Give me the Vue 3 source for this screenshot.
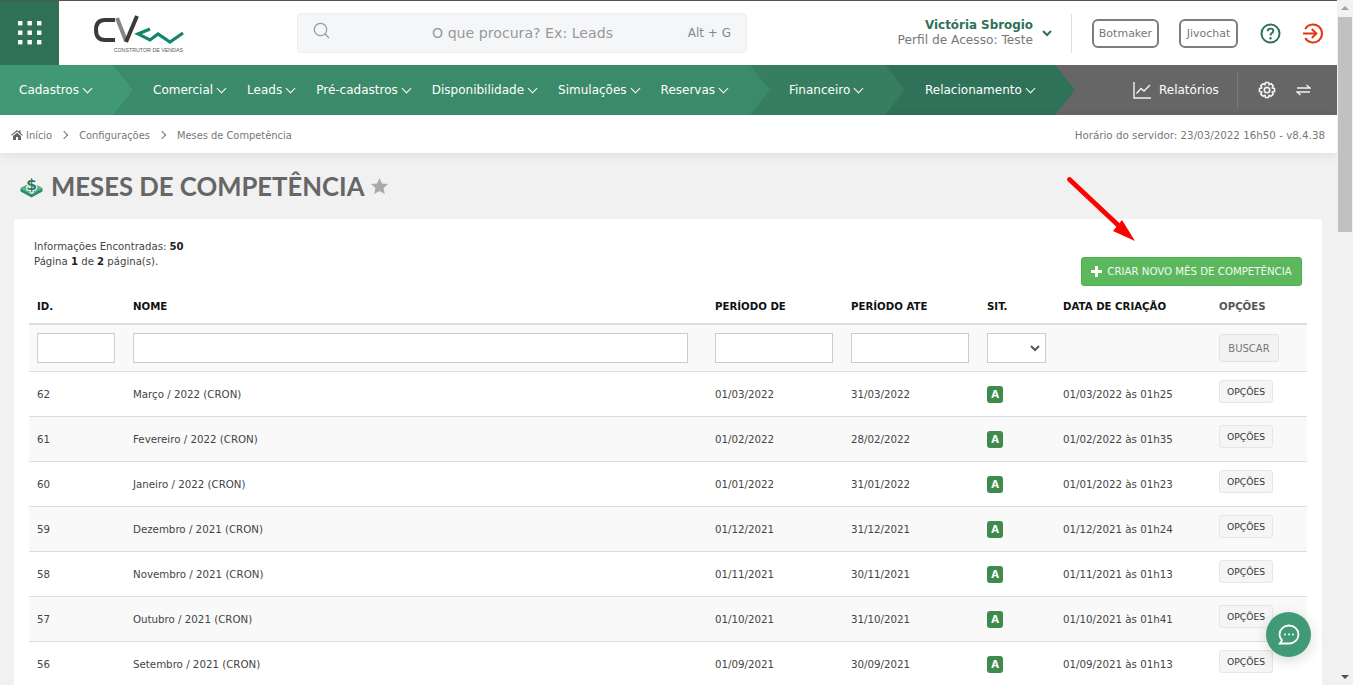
<script setup>
const navA = ['Comercial', 'Leads', 'Pré-cadastros', 'Disponibilidade', 'Simulações', 'Reservas']
const rows = [
  ['62', 'Março / 2022 (CRON)', '01/03/2022', '31/03/2022', '01/03/2022 às 01h25'],
  ['61', 'Fevereiro / 2022 (CRON)', '01/02/2022', '28/02/2022', '01/02/2022 às 01h35'],
  ['60', 'Janeiro / 2022 (CRON)', '01/01/2022', '31/01/2022', '01/01/2022 às 01h23'],
  ['59', 'Dezembro / 2021 (CRON)', '01/12/2021', '31/12/2021', '01/12/2021 às 01h24'],
  ['58', 'Novembro / 2021 (CRON)', '01/11/2021', '30/11/2021', '01/11/2021 às 01h13'],
  ['57', 'Outubro / 2021 (CRON)', '01/10/2021', '31/10/2021', '01/10/2021 às 01h41'],
  ['56', 'Setembro / 2021 (CRON)', '01/09/2021', '30/09/2021', '01/09/2021 às 01h13'],
]
</script>

<template>
  <div class="shell">
    <div class="page">
      <header class="top">
        <button class="apps" aria-label="Menu">
          <svg width="24" height="24" viewBox="0 0 24 24" fill="#fff">
            <rect v-for="p in [0,9.5,19].flatMap(y => [0,9.5,19].map(x => [x,y]))" :key="p.join()" :x="p[0]" :y="p[1]" width="4.4" height="4.4" />
          </svg>
        </button>
        <div class="logo">
          <svg width="96" height="33" viewBox="0 0 96 33" fill="none">
            <path d="M25 7 H15 Q6 7 6 17 Q6 27 15 27 H25" stroke="#3c3a38" stroke-width="4" />
            <path d="M27 5 L36 28" stroke="#8a8582" stroke-width="4" />
            <path d="M36 29 L47 3" stroke="#3c3a38" stroke-width="4" />
            <path d="M60 16 L48 21 L60 27 L68 21 L80 29 L93 20" stroke="#12856a" stroke-width="3.2" />
          </svg>
          <span class="logotext">CONSTRUTOR DE VENDAS</span>
        </div>
        <div class="search">
          <svg class="sicon" width="17" height="17" viewBox="0 0 17 17" fill="none" stroke="#9a9a9a" stroke-width="1.3">
            <circle cx="7.5" cy="7.5" r="6.2" /><path d="M12 12 L16 16" />
          </svg>
          <span class="sph">O que procura? Ex: Leads</span>
          <span class="skey">Alt + G</span>
        </div>
        <div class="user">
          <div class="uname">Victória Sbrogio</div>
          <div class="uprof">Perfil de Acesso: Teste</div>
        </div>
        <svg class="uchev" width="10" height="7" viewBox="0 0 10 7" fill="none" stroke="#2f7157" stroke-width="2"><path d="M1 1 L5 5 L9 1" /></svg>
        <div class="vline"></div>
        <button class="chat bot">Botmaker</button>
        <button class="chat jivo">Jivochat</button>
        <svg class="help" width="21" height="21" viewBox="0 0 21 21" fill="none">
          <circle cx="10.5" cy="10.5" r="9" stroke="#2f7157" stroke-width="2" />
          <path d="M7.6 8.2 Q7.8 5.6 10.5 5.6 Q13.3 5.6 13.3 8 Q13.3 9.4 11.8 10.2 Q10.5 10.9 10.5 12.4" stroke="#2f7157" stroke-width="1.9" />
          <circle cx="10.5" cy="15.2" r="1.2" fill="#2f7157" />
        </svg>
        <svg class="out" width="21" height="21" viewBox="0 0 21 21" fill="none" stroke="#e33412" stroke-width="2">
          <path d="M3.2 6 A9 9 0 1 1 3.2 15" /><path d="M1 10.5 H14" /><path d="M9.8 6 L14.3 10.5 L9.8 15" />
        </svg>
      </header>

      <nav class="nav">
        <a class="seg s1"><span class="lnk">Cadastros<i class="chev"></i></span></a>
        <div class="s2">
          <a v-for="n in navA" :key="n" class="lnk">{{ n }}<i class="chev"></i></a>
        </div>
        <a class="seg s3"><span class="lnk">Financeiro<i class="chev"></i></span></a>
        <a class="seg s4"><span class="lnk">Relacionamento<i class="chev"></i></span></a>
        <div class="s5">
          <svg width="18" height="17" viewBox="0 0 18 17" fill="none" stroke="#f2f2f2" stroke-width="1.4">
            <path d="M1 0 V16 H18" /><path d="M3.5 11.5 L8 6.5 L11 9 L17 3" />
          </svg>
          <span class="rel">Relatórios</span>
          <div class="vsep"></div>
          <svg width="18" height="18" viewBox="0 0 24 24" fill="none" stroke="#f2f2f2" stroke-width="2.2">
            <circle cx="12" cy="12" r="3.6" />
            <path d="M10 2 H14 L14.8 5 L17.4 3.6 L20.3 6.5 L18.9 9.2 L22 10 V14 L18.9 14.8 L20.3 17.5 L17.5 20.3 L14.8 18.9 L14 22 H10 L9.2 18.9 L6.5 20.3 L3.7 17.5 L5.1 14.8 L2 14 V10 L5.1 9.2 L3.7 6.5 L6.5 3.7 L9.2 5.1 Z" stroke-linejoin="round" />
          </svg>
          <svg class="swap" width="15" height="12" viewBox="0 0 15 12" fill="none" stroke="#f2f2f2" stroke-width="1.4">
            <path d="M1 4 H14 L10.5 1" /><path d="M14 8 H1 L4.5 11" />
          </svg>
        </div>
      </nav>

      <div class="crumbs">
        <svg width="12" height="10" viewBox="0 0 12 10" fill="#666"><path d="M6 0 L8 1.7 V0.6 H9.6 V3 L12 5 L11.3 5.8 L6 1.6 L0.7 5.8 L0 5 Z M2 6 L6 2.8 L10 6 V10 H7 V7 H5 V10 H2 Z" /></svg>
        <span class="c first">Início</span><i class="sepc"></i>
        <span class="c">Configurações</span><i class="sepc"></i>
        <span class="c">Meses de Competência</span>
        <span class="srv">Horário do servidor: 23/03/2022 16h50 - v8.4.38</span>
      </div>

      <main class="main">
        <div class="titlebar">
          <svg width="23" height="24" viewBox="0 0 23 24">
            <path d="M0.5 14 L11.5 20 L22.5 14 V17.5 L11.5 23.5 L0.5 17.5 Z" fill="#2f8f6d" />
            <path d="M0.5 14 L11.5 8 L22.5 14 L11.5 20 Z" fill="#4cb391" />
            <text class="dollar" x="11.5" y="15.5" text-anchor="middle">$</text>
          </svg>
          <h1>MESES DE COMPETÊNCIA</h1>
          <svg width="17" height="16" viewBox="0 0 17 16" fill="#aaa"><path d="M8.5 0 L11 5.4 L17 6.1 L12.6 10.1 L13.8 16 L8.5 13 L3.2 16 L4.4 10.1 L0 6.1 L6 5.4 Z" /></svg>
        </div>

        <svg class="arrow" width="80" height="70" viewBox="0 0 80 70">
          <path d="M3.5 4.5 L52 50" stroke="#f00" stroke-width="4.8" stroke-linecap="round" />
          <path d="M69 66 L47 56 L56 45 Z" fill="#f00" />
        </svg>

        <section class="card">
          <div class="cardhead">
            <div class="info">
              <div>Informações Encontradas: <b>50</b></div>
              <div>Página <b>1</b> de <b>2</b> página(s).</div>
            </div>
            <button class="create">
              <svg width="11" height="11" viewBox="0 0 11 11" fill="#fff"><path d="M4 0 H7 V4 H11 V7 H7 V11 H4 V7 H0 V4 H4 Z" /></svg>
              CRIAR NOVO MÊS DE COMPETÊNCIA
            </button>
          </div>
          <table>
            <colgroup>
              <col class="c1" /><col class="c2" /><col class="c3" /><col class="c3" /><col class="c5" /><col class="c6" /><col class="c1" />
            </colgroup>
            <thead>
              <tr class="hd">
                <th>ID.</th><th>NOME</th><th>PERÍODO DE</th><th>PERÍODO ATE</th><th>SIT.</th><th>DATA DE CRIAÇÃO</th><th class="op">OPÇÕES</th>
              </tr>
              <tr class="flt">
                <td><input class="i1" /></td><td><input class="i2" /></td><td><input class="i3" /></td><td><input class="i3" /></td>
                <td><div class="sel"><svg width="10" height="7" viewBox="0 0 10 7" fill="none" stroke="#555" stroke-width="2"><path d="M1 1 L5 5 L9 1" /></svg></div></td>
                <td></td>
                <td><button class="busca">BUSCAR</button></td>
              </tr>
            </thead>
            <tbody>
              <tr v-for="r in rows" :key="r[0]">
                <td>{{ r[0] }}</td><td>{{ r[1] }}</td><td>{{ r[2] }}</td><td>{{ r[3] }}</td>
                <td class="bc"><span class="badge">A</span></td>
                <td>{{ r[4] }}</td>
                <td class="optc"><button class="opt">OPÇÕES</button></td>
              </tr>
            </tbody>
          </table>
        </section>
      </main>
    </div>

    <aside class="scroll">
      <i class="up"></i>
      <div class="thumb"></div>
      <i class="down"></i>
    </aside>

    <button class="fab" aria-label="Chat">
      <svg width="22" height="22" viewBox="0 0 22 22" fill="none" stroke="#fff" stroke-width="1.8">
        <path d="M11 1.5 C16.3 1.5 20.5 5.4 20.5 10.5 C20.5 15.6 16.3 19.5 11 19.5 H1.8 L4 16.2 C2.4 14.6 1.5 12.7 1.5 10.5 C1.5 5.4 5.7 1.5 11 1.5 Z" />
        <circle cx="7" cy="10.5" r="1" fill="#fff" stroke="none" /><circle cx="11" cy="10.5" r="1" fill="#fff" stroke="none" /><circle cx="15" cy="10.5" r="1" fill="#fff" stroke="none" />
      </svg>
    </button>
  </div>
</template>

<style>
html, body { margin: 0; height: 100%; overflow: hidden; }
</style>

<style scoped>
* { box-sizing: border-box; }
.shell { position: relative; display: flex; width: 1353px; height: 685px; overflow: hidden; background: #f1f1f1; font-family: "DejaVu Sans", sans-serif; }
.page { width: 1337px; flex: none; display: flex; flex-direction: column; }
button { font-family: inherit; cursor: pointer; }

.top { height: 65px; flex: none; background: #fff; border-top: 1px solid #555; display: flex; align-items: center; }
.apps { width: 59px; height: 64px; border: 0; background: #2f7157; display: flex; align-items: center; justify-content: center; padding: 0; }
.logo { width: 96px; margin-left: 31px; display: flex; flex-direction: column; align-items: flex-end; }
.logo svg { flex: none; }
.logotext { font-size: 5.3px; line-height: 7px; color: #555; font-family: "Liberation Sans", sans-serif; white-space: nowrap; margin: 1px 3px 0 0; }
.search { margin-left: 111px; width: 450px; height: 40px; margin-top: -1px; background: #f5f6f8; border: 1px solid #eceef0; border-radius: 4px; display: flex; align-items: center; position: relative; }
.sicon { margin-left: 15px; margin-top: -5px; }
.sph { position: absolute; left: 134px; font-size: 14.15px; color: #999; white-space: nowrap; }
.skey { position: absolute; right: 15px; font-size: 12px; color: #888; }
.user { margin-left: auto; text-align: right; line-height: 15px; }
.uname { font-size: 11.9px; font-weight: 700; color: #2f7157; }
.uprof { font-size: 12.2px; color: #777; }
.uchev { margin-left: 9px; margin-right: 19px; }
.vline { width: 1px; height: 39px; background: #ddd; }
.chat { height: 29px; padding: 0; background: #fff; border: 2px solid #7d7d7d; border-radius: 6px; color: #777; font-size: 11px; }
.bot { width: 67px; margin-left: 20px; }
.jivo { width: 59px; margin-left: 20px; }
.help { margin-left: 22px; }
.out { margin-left: 21px; margin-right: 14px; }

.nav { height: 50px; flex: none; display: flex; background: #666; color: #fff; font-size: 12px; position: relative; }
.lnk { display: inline-flex; align-items: center; color: #fff; white-space: nowrap; }
.chev { display: inline-block; width: 7px; height: 7px; border: solid #fff; border-width: 0 1.8px 1.8px 0; transform: rotate(45deg); margin: -3px 2px 0 5px; }
.seg { display: flex; align-items: center; clip-path: polygon(0 0, calc(100% - 20px) 0, 100% 50%, calc(100% - 20px) 100%, 0 100%); flex: none; }
.s1 { width: 133px; padding-left: 19px; background: #419874; position: relative; z-index: 3; }
.s2 { width: 657px; margin-left: -20px; padding-left: 40px; background: #3b8a6a; display: flex; align-items: center; gap: 20px; clip-path: polygon(0 0, calc(100% - 20px) 0, 100% 50%, calc(100% - 20px) 100%, 0 100%); position: relative; z-index: 2; flex: none; }
.s3 { width: 155px; margin-left: -20px; padding-left: 39px; background: #367e5f; position: relative; z-index: 1; }
.s4 { width: 190px; margin-left: -20px; padding-left: 40px; background: #30715a; }
.s5 { flex: 1; display: flex; align-items: center; padding-left: 58px; }
.rel { margin-left: 8px; color: #fff; }
.vsep { width: 1px; height: 38px; background: #7a7a7a; margin: 0 20px 0 18px; }
.swap { margin-left: 20px; }

.crumbs { height: 38px; flex: none; background: #fff; display: flex; align-items: center; padding: 2px 12px 0 11px; font-size: 9.9px; color: #777; box-shadow: 0 2px 12px rgba(0,0,0,.08); position: relative; }
.c.first { margin-left: 3px; }
.sepc { width: 6px; height: 6px; border: solid #777; border-width: 1px 1px 0 0; transform: rotate(45deg); margin: 0 12px 0 9px; }
.srv { margin-left: auto; font-size: 10.3px; }

.main { flex: 1; padding: 0 15px 0 14px; position: relative; min-height: 0; }
.titlebar { height: 66px; display: flex; align-items: center; padding-left: 6px; }
h1 { margin: 2px 6px 0 8px; font: 700 25.7px/1 Lato, sans-serif; color: #666; }
.dollar { font: 700 16px "DejaVu Sans", sans-serif; fill: #2f7a60; stroke: #fff; stroke-width: 2px; paint-order: stroke; }
.arrow { position: absolute; left: 1066px; top: 22px; }

.card { background: #fff; border-radius: 4px; padding: 20px 15px 0; height: 600px; }
.cardhead { height: 51px; display: flex; justify-content: space-between; align-items: flex-start; padding: 0 5px; font-size: 10.15px; color: #444; }
.info { line-height: 15px; }
.info b { color: #222; }
.create { margin-top: 18px; width: 221px; height: 29px; background: #5cb85c; border: 1px solid #4cae4c; border-radius: 3px; color: #f2f8f2; font-size: 10.2px; display: flex; align-items: center; justify-content: center; gap: 5px; padding: 0; white-space: nowrap; }

table { width: 1278px; table-layout: fixed; border-collapse: collapse; font-size: 10.25px; color: #444; }
.c1 { width: 96px; } .c2 { width: 582px; } .c3 { width: 136px; } .c5 { width: 76px; } .c6 { width: 156px; }
th, td { padding: 0 8px; text-align: left; }
th { height: 34px; font-size: 10.2px; color: #111; font-weight: 700; border-bottom: 2px solid #ddd; vertical-align: middle; }
th.op { color: #555; }
.flt td { height: 47px; background: #f9f9f9; border-bottom: 1px solid #ddd; vertical-align: top; padding-top: 8px; }
tbody td { height: 45px; padding-top: 0; border-bottom: 1px solid #ddd; }
tbody td.bc { padding-top: 2px; }
tbody tr:nth-child(even) td { background: #f9f9f9; }
tbody td.optc { vertical-align: top; padding-top: 8px; }
input { display: block; height: 30px; border: 1px solid #ccc; background: #fff; outline: 0; padding: 0; }
.i1 { width: 78px; } .i2 { width: 555px; } .i3 { width: 118px; }
.sel { width: 59px; height: 30px; border: 1px solid #ccc; background: #fff; display: flex; align-items: center; justify-content: flex-end; padding-right: 5px; }
.busca { width: 60px; height: 28px; padding: 0; margin-top: 1px; background: #f2f2f2; border: 1px solid #e3e3e3; border-radius: 3px; font-size: 10px; color: #777; display: block; }
.badge { display: inline-flex; width: 16px; height: 17px; align-items: center; justify-content: center; background: #3f8a4d; border-radius: 3px; color: #fff; font-size: 10px; font-weight: 700; vertical-align: middle; }
.opt { width: 54px; height: 23px; padding: 0; background: #f5f5f5; border: 1px solid #e6e6e6; border-radius: 3px; font-size: 9.2px; color: #333; display: block; }

.scroll { width: 16px; flex: none; background: #f1f1f1; position: relative; }
.thumb { position: absolute; left: 1px; right: 1px; top: 17px; height: 215px; background: #c1c1c1; }
.up, .down { position: absolute; left: 4px; width: 0; height: 0; border: 4px solid transparent; }
.up { top: 2px; border-bottom-color: #a3a3a3; }
.down { bottom: 2px; border-top-color: #505050; }
.fab { position: absolute; left: 1266px; top: 612px; width: 45px; height: 45px; border-radius: 50%; border: 0; background: #409a76; display: flex; align-items: center; justify-content: center; padding: 0; box-shadow: 0 4px 14px rgba(0,0,0,.15); }
</style>
